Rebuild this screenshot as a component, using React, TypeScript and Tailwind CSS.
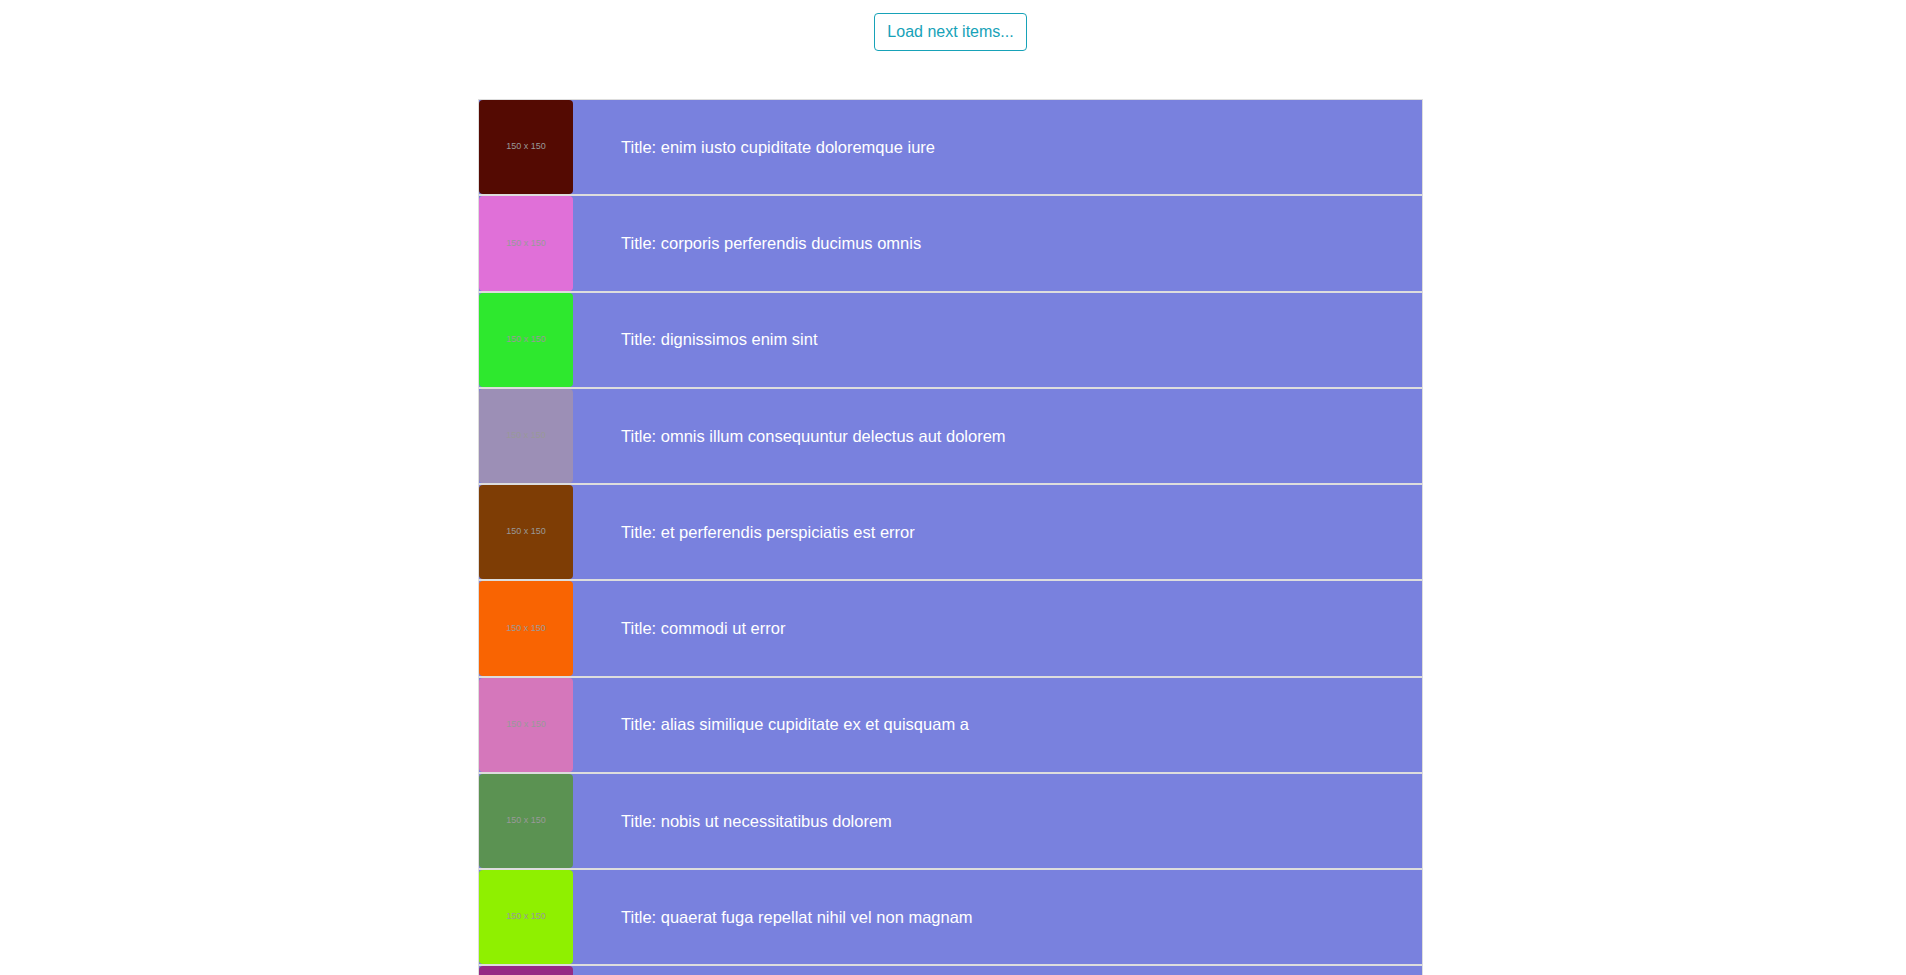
import React from 'react';

const items = [
  { color: '#540a02', title: 'enim iusto cupiditate doloremque iure' },
  { color: '#e070d8', title: 'corporis perferendis ducimus omnis' },
  { color: '#2ee82e', title: 'dignissimos enim sint' },
  { color: '#9c8fb6', title: 'omnis illum consequuntur delectus aut dolorem' },
  { color: '#7e3d05', title: 'et perferendis perspiciatis est error' },
  { color: '#f96402', title: 'commodi ut error' },
  { color: '#d577bb', title: 'alias similique cupiditate ex et quisquam a' },
  { color: '#5b9252', title: 'nobis ut necessitatibus dolorem' },
  { color: '#8ff000', title: 'quaerat fuga repellat nihil vel non magnam' },
  { color: '#952a85', title: 'voluptas sit est illo sed accusamus' }
];

const Thumb = ({ color }: { color: string }) => {
  return (
    <div
      className="w-[94px] h-[94.25px] shrink-0 rounded-[4px] flex items-center justify-center"
      style={{ backgroundColor: color }}
    >
      <span className="text-[9px] text-[#999]">150 x 150</span>
    </div>
  );
};

const ItemRow = ({ color, title }: { color: string; title: string }) => {
  return (
    <div className="flex flex-row items-center bg-[#7981de] border border-[#ddd]">
      <Thumb color={color} />
      <p className="ml-12 text-white text-[16.5px]">Title: {title}</p>
    </div>
  );
};

export default function App() {
  return (
    <div
      className="min-h-screen bg-white pr-[5px]"
      style={{ fontFamily: '"Liberation Sans", Arial, sans-serif' }}
    >
      <div className="flex justify-center pt-[13px]">
        <button className="h-[38px] px-3 border border-[#17a2b8] rounded-[4px] text-[#17a2b8] text-base">
          Load next items...
        </button>
      </div>
      <div className="w-[945px] mx-auto mt-12 flex flex-col">
        {items.map((item, i) => (
          <ItemRow key={i} color={item.color} title={item.title} />
        ))}
      </div>
    </div>
  );
}
